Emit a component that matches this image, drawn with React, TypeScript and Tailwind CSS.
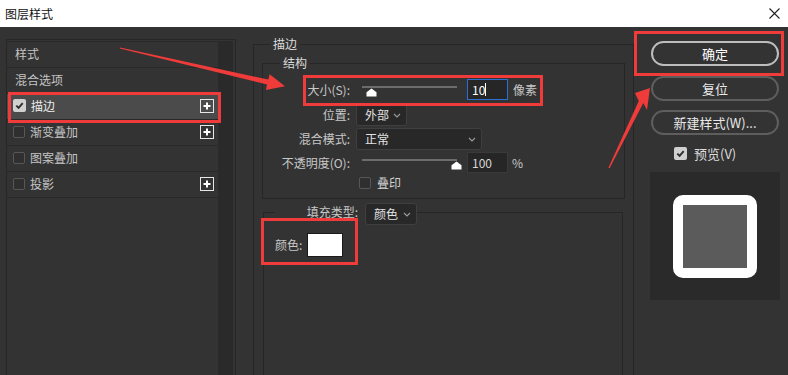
import React from "react";

function Check({ checked }: { checked?: boolean }) {
  return checked ? (
    <span className="inline-flex w-[13px] h-[13px] min-w-[13px] rounded-[2px] bg-[#d0d0d0] items-center justify-center shrink-0">
      <svg width="9" height="9" viewBox="0 0 9 9">
        <path d="M1.3 4.6 L3.6 6.8 L7.7 2.2" stroke="#2e2e2e" strokeWidth="1.9" fill="none" />
      </svg>
    </span>
  ) : (
    <span className="inline-block w-[12px] h-[12px] min-w-[12px] rounded-[2px] border border-[#575757] bg-[#2f2f2f] shrink-0" />
  );
}

function Plus() {
  return (
    <span className="w-[14px] h-[14px] border border-[#e6e6e6] flex items-center justify-center">
      <svg width="10" height="10" viewBox="0 0 10 10">
        <path d="M5 1.5v7M1.5 5h7" stroke="#ffffff" strokeWidth="2" />
      </svg>
    </span>
  );
}

function Chevron() {
  return (
    <svg width="8" height="5" viewBox="0 0 8 5">
      <path d="M1 1 L4 4 L7 1" stroke="#9c9c9c" strokeWidth="1.1" fill="none" />
    </svg>
  );
}

function Dropdown({ text, w }: { text: string; w: string }) {
  return (
    <div className={`${w} h-[22px] bg-[#282828] border border-[#3f3f3f] rounded-[3px] flex items-center justify-between pl-[8px] pr-[5px] text-[#e2e2e2]`}>
      <span>{text}</span>
      <Chevron />
    </div>
  );
}

function Slider({ thumb }: { thumb: string }) {
  return (
    <div className="relative ml-[12px] w-[95px] h-full">
      <div className="absolute top-[7px] left-0 right-0 h-[2px] bg-[#6c6c6c]" />
      <svg className={`absolute top-[9px] ${thumb}`} width="11" height="9" viewBox="0 0 11 9">
        <path d="M5.5 0.5 L10.5 4.2 L10.5 8.5 L0.5 8.5 L0.5 4.2 Z" fill="#ffffff" />
      </svg>
    </div>
  );
}

function ListRow({
  label,
  check,
  checked,
  plus,
  selected,
}: {
  label: string;
  check?: boolean;
  checked?: boolean;
  plus?: boolean;
  selected?: boolean;
}) {
  return (
    <div
      className={`h-[26px] border-b border-[#292929] flex items-center pr-[4px] pb-[2px] ${
        selected ? "bg-[#4b4b4b] text-[#ececec]" : "text-[#c4c4c4]"
      } ${check ? "pl-[6px]" : "pl-[8px]"}`}
    >
      {check && <Check checked={checked} />}
      <span className={check ? "ml-[5px]" : ""}>{label}</span>
      <div className="flex-1" />
      {plus && <Plus />}
    </div>
  );
}

export default function App() {
  return (
    <div className="relative w-[788px] h-[375px] overflow-hidden bg-[#333333] text-[12px] leading-[16px] font-['Noto_Sans_CJK_SC','Noto_Sans',sans-serif]">
      {/* title bar */}
      <div className="h-[27px] bg-white flex items-center justify-between pl-[5px] pr-[8px]">
        <span className="text-[12px] text-[#111111]">图层样式</span>
        <svg width="11" height="11" viewBox="0 0 11 11">
          <path d="M0.5 0.5 L10.5 10.5 M10.5 0.5 L0.5 10.5" stroke="#222" strokeWidth="1.1" />
        </svg>
      </div>

      <div className="flex h-[348px]">
        {/* left list */}
        <div className="ml-[6px] mt-[12px] w-[230px] border-l border-t border-r border-[#272727] flex pt-[1px]">
          <div className="w-[211px] flex flex-col border-t border-[#292929]">
            <ListRow label="样式" />
            <ListRow label="混合选项" />
            <ListRow label="描边" check checked plus selected />
            <ListRow label="渐变叠加" check plus />
            <ListRow label="图案叠加" check />
            <ListRow label="投影" check plus />
          </div>
          <div className="w-[15px] bg-[#2a2a2a]" />
        </div>

        {/* middle */}
        <div className="ml-[17px] w-[381px] pt-[9px]">
          <fieldset className="w-[381px] h-[360px] border border-b-0 border-[#262626]">
            <legend className="ml-[16px] px-[3px] text-[#dcdcdc]">描边</legend>

            <fieldset className="mx-[8px] mt-[3px] border border-[#262626] pb-[7px]">
              <legend className="ml-[17px] px-[3px] text-[#dcdcdc]">结构</legend>
              <div className="flex flex-col text-[#c8c8c8]">
                <div className="mt-[8px] h-[21px] flex items-center">
                  <span className="w-[87px] text-right">大小(S):</span>
                  <Slider thumb="left-[4px]" />
                  <div className="ml-[10px] w-[41px] h-[21px] border border-[#2c6fd1] bg-[#262626] flex items-center pl-[4px] text-white">
                    <span>10</span>
                    <span className="w-[1px] h-[13px] bg-white" />
                  </div>
                  <span className="ml-[5px]">像素</span>
                </div>
                <div className="mt-[4px] h-[22px] flex items-center">
                  <span className="w-[87px] text-right">位置:</span>
                  <div className="ml-[6px]">
                    <Dropdown text="外部" w="w-[51px]" />
                  </div>
                </div>
                <div className="mt-[2px] h-[22px] flex items-center">
                  <span className="w-[87px] text-right">混合模式:</span>
                  <div className="ml-[6px]">
                    <Dropdown text="正常" w="w-[126px]" />
                  </div>
                </div>
                <div className="mt-[2px] h-[21px] flex items-center">
                  <span className="w-[87px] text-right">不透明度(O):</span>
                  <Slider thumb="left-[89px]" />
                  <div className="ml-[10px] w-[41px] h-[21px] border border-[#3a3a3a] bg-[#262626] flex items-center pl-[4px] text-[#d6d6d6]">
                    100
                  </div>
                  <span className="ml-[4px]">%</span>
                </div>
                <div className="mt-[2px] h-[16px] flex items-center">
                  <span className="w-[87px]" />
                  <div className="ml-[9px] flex items-center">
                    <Check />
                  </div>
                  <span className="ml-[6px] text-[#d2d2d2]">叠印</span>
                </div>
              </div>
            </fieldset>

            <fieldset className="ml-[9px] mr-[10px] h-[180px] border border-[#262626]">
              <legend className="ml-[11px] h-[26px] flex items-start">
                <span className="w-[83px] text-right self-center text-[#c8c8c8]">填充类型:</span>
                <div className="ml-[7px] mt-[4px]">
                  <Dropdown text="颜色" w="w-[52px]" />
                </div>
              </legend>
              <div className="pt-[8px] pl-[11px] flex items-center text-[#c8c8c8]">
                <span className="w-[28px]">颜色:</span>
                <span className="ml-[4px] w-[36px] h-[24px] bg-white border border-[#1a1a1a]" />
              </div>
            </fieldset>
          </fieldset>
        </div>

        {/* right */}
        <div className="w-[154px] pl-[17px] pt-[14px] flex flex-col">
          <div className="w-[128px] h-[25px] rounded-full border-2 border-[#bdbdbd] text-[13px] text-white flex items-center justify-center">
            确定
          </div>
          <div className="mt-[10px] w-[128px] h-[25px] rounded-full border-2 border-[#5e5e5e] text-[13px] text-[#e8e8e8] flex items-center justify-center">
            复位
          </div>
          <div className="mt-[9px] w-[128px] h-[25px] rounded-full border-2 border-[#5e5e5e] text-[13px] text-[#e8e8e8] flex items-center justify-center">
            新建样式(W)...
          </div>
          <div className="mt-[12px] ml-[23px] h-[13px] flex items-center">
            <Check checked />
            <span className="ml-[7px] text-[13px] text-[#dcdcdc]">预览(V)</span>
          </div>
          <div className="mt-[12px] -ml-[1px] w-[130px] h-[128px] bg-[#2a2a2a] flex items-center justify-center">
            <div className="w-[84px] h-[83px] rounded-[10px] bg-white p-[10px]">
              <div className="w-full h-full bg-[#5b5b5b]" />
            </div>
          </div>
        </div>
      </div>

      {/* red highlight boxes */}
      <div className="absolute left-[8px] top-[92px] w-[213px] h-[31px] border-[3px] border-[#f03b3b]" />
      <div className="absolute left-[303px] top-[75px] w-[240px] h-[31px] border-[3px] border-[#f03b3b]" />
      <div className="absolute left-[261px] top-[218px] w-[97px] h-[47px] border-[3px] border-[#f03b3b]" />
      <div className="absolute left-[634px] top-[31px] w-[150px] h-[45px] border-[3px] border-[#f03b3b]" />

      {/* arrows */}
      <svg className="absolute left-0 top-0 pointer-events-none" width="788" height="375" viewBox="0 0 788 375">
        <polygon
          fill="#f03b3b"
          points="120.1,47.4 268.3,79.6 269.6,74.2 285,86.2 266,90 267,84.4 119.9,48.6"
        />
        <polygon
          fill="#f03b3b"
          points="650,88 647,110 643.3,103.1 609.6,168.3 608.4,167.7 638.8,100.9 635,93"
        />
      </svg>
    </div>
  );
}
